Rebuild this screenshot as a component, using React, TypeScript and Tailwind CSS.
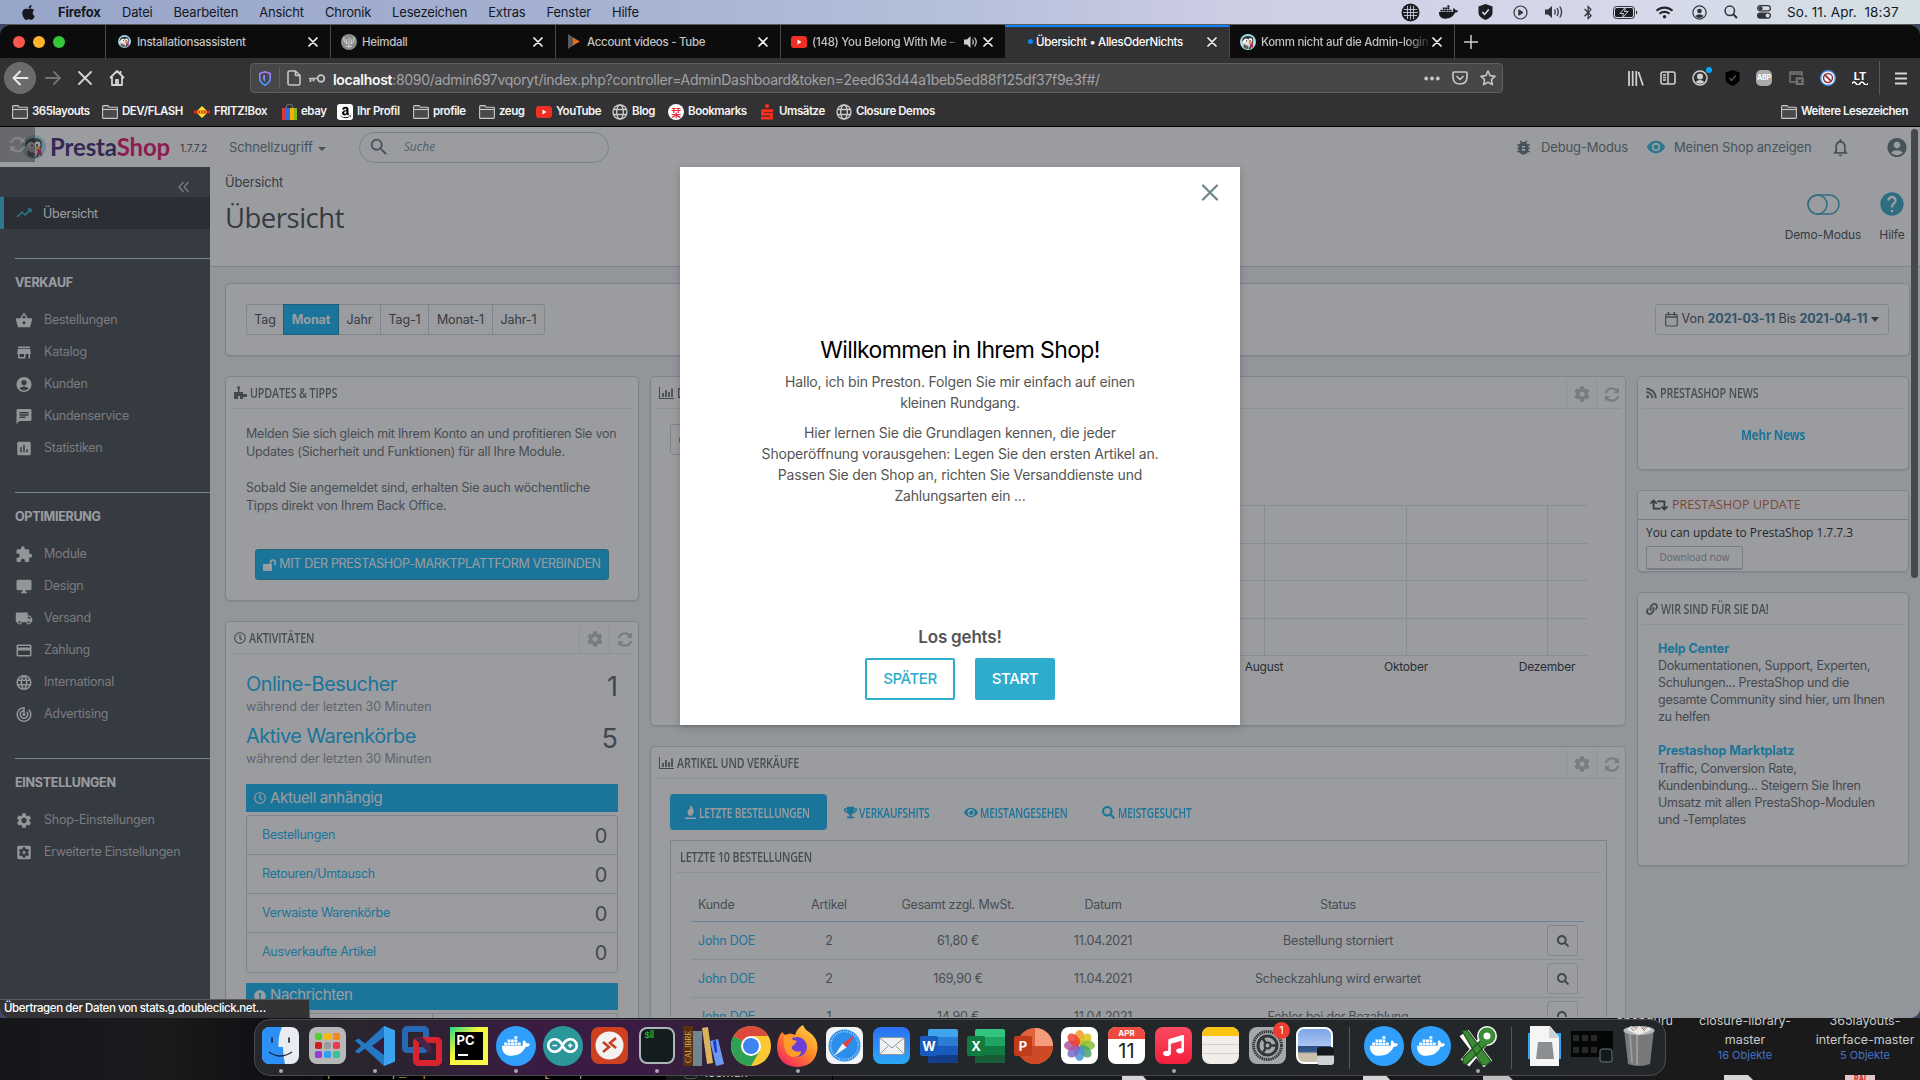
import React from "react";
import type { ReactNode } from "react";
import {
  MdTrendingUp, MdShoppingBasket, MdStore, MdAccountCircle, MdChat, MdAssessment, MdExtension, MdDesktopWindows,
  MdLocalShipping, MdPayment, MdLanguage, MdTrackChanges, MdSettings, MdSettingsApplications, MdNotificationsNone,
  MdVisibility, MdBugReport, MdHelp, MdSearch,
} from "react-icons/md";
import {
  FaApple, FaDocker, FaBluetoothB, FaWifi, FaCog, FaRss, FaLink, FaTrophy, FaEye, FaSearch, FaRetweet,
  FaRegClock, FaExclamationCircle, FaAmazon, FaMusic,
} from "react-icons/fa";
import { SiArduino } from "react-icons/si";

type P = { children?: ReactNode; className?: string };

/* ---------- macOS menu bar ---------- */
const menus = ["Datei", "Bearbeiten", "Ansicht", "Chronik", "Lesezeichen", "Extras", "Fenster", "Hilfe"];

const Slot = ({ children, className = "" }: P) => (
  <div className={"flex shrink-0 items-center justify-center " + className}>{children}</div>
);

function MenuBar() {
  return (
    <div className="flex h-[24px] items-center bg-[linear-gradient(90deg,#97a5c9_0%,#a4b1d1_30%,#b5c0da_50%,#cdcde4_64%,#d6d9ea_85%,#d3dfe3_100%)] text-[13px] tracking-[-0.2px] text-[#16181d]">
      <FaApple className="ml-[20px] h-[17px] w-[17px]" />
      <span className="mt-[2px] ml-[21px] w-[64px] font-bold">Firefox</span>
      <div className="mt-[2px] flex gap-[21px]">
        {menus.map((m) => <span key={m}>{m}</span>)}
      </div>
      <div className="ml-auto flex items-center">
        <Slot className="w-[38px]">
          <svg width="19" height="19" viewBox="0 0 19 19"><circle cx="9.500" cy="9.500" r="9" fill="#1c1d22" /><path d="M3 6.500h13M2 9.500h15M3 12.500h13M6.500 3v13M9.500 2.500v14M12.500 3v13" stroke="#c9cbe0" strokeWidth="0.900" /></svg>
        </Slot>
        <Slot className="w-[38px]"><FaDocker className="h-[18px] w-[19px]" /></Slot>
        <Slot className="w-[36px]"><Shield fill="#1c1d22" check="#dadbe9" /></Slot>
        <Slot className="w-[34px]">
          <svg width="15" height="15" viewBox="0 0 15 15" fill="none" stroke="#33343a"><circle cx="7.500" cy="7.500" r="6.500" strokeWidth="1.200" /><path d="M5.800 4.800v5.400l4.200-2.700z" fill="#33343a" /></svg>
        </Slot>
        <Slot className="w-[34px]">
          <svg width="19" height="14" viewBox="0 0 19 14"><path d="M0 4.500h3L7 1v12L3 9.500H0z" fill="#33343a" /><path d="M9.500 4.500q1.500 2.500 0 5M12 3q2.500 4 0 8M14.800 1.500q3.600 5.500 0 11" fill="none" stroke="#33343a" strokeWidth="1.300" /></svg>
        </Slot>
        <Slot className="w-[34px]"><FaBluetoothB className="h-[15px] w-[12px] text-[#33343a]" /></Slot>
        <Slot className="w-[40px]">
          <svg width="25" height="13" viewBox="0 0 25 13"><rect x="0.500" y="0.500" width="21" height="12" rx="3" fill="none" stroke="#33343a" /><rect x="2" y="2" width="18" height="9" rx="1.500" fill="#1c1d22" /><path d="M12.500 1L7 7.500h3.500L9.500 12 15 5.500h-3.500z" fill="#1c1d22" stroke="#d9dae8" strokeWidth="0.900" /><path d="M23 4.500v4q1.300-.5 1.300-2t-1.300-2z" fill="#33343a" /></svg>
        </Slot>
        <Slot className="w-[39px]"><FaWifi className="h-[15px] w-[17px] text-[#26272c]" /></Slot>
        <Slot className="w-[30px]">
          <svg width="15" height="15" viewBox="0 0 15 15"><circle cx="7.500" cy="7.500" r="6.600" fill="none" stroke="#33343a" strokeWidth="1.200" /><circle cx="7.500" cy="6" r="2.300" fill="#33343a" /><path d="M3.300 11q4.200-3.500 8.400 0-4.200 4-8.400 0" fill="#33343a" /></svg>
        </Slot>
        <Slot className="w-[34px]">
          <svg width="14" height="14" viewBox="0 0 14 14" fill="none" stroke="#33343a" strokeWidth="1.500"><circle cx="5.800" cy="5.800" r="4.700" /><path d="M9.200 9.200L13 13" strokeWidth="2" /></svg>
        </Slot>
        <Slot className="w-[31px]">
          <svg width="14" height="14" viewBox="0 0 14 14"><rect x="0.600" y="0.600" width="12.800" height="5.300" rx="2.600" fill="none" stroke="#33343a" strokeWidth="1.200" /><circle cx="3.600" cy="3.200" r="2" fill="#33343a" /><rect y="7.500" width="14" height="6.200" rx="3.100" fill="#33343a" /><circle cx="10.600" cy="10.600" r="2" fill="#d9dbe8" /></svg>
        </Slot>
        <span className="mr-[19px] ml-[8px] w-[114px] text-[13.500px] tracking-[0.080px] whitespace-pre">So. 11. Apr.  18:37</span>
      </div>
    </div>
  );
}

function Shield({ fill, check }: { fill: string; check: string }) {
  return (
    <svg width="15" height="16" viewBox="0 0 15 16"><path d="M7.500 0L14.500 2.500V9q0 4-7 7-7-3-7-7V2.500z" fill={fill} /><path d="M4.300 8l2.300 2.400 4.200-5" fill="none" stroke={check} strokeWidth="1.600" /></svg>
  );
}

/* ---------- Browser chrome ---------- */
const PrestonIcon = ({ size }: { size: number }) => (
  <svg width={size} height={size} viewBox="0 0 24 24">
    <circle cx="12" cy="12" r="12" fill="#a4dbe8" />
    <path d="M3 10Q4 3 12 3t8 6l-1 6-3 7q-7 2-11-2z" fill="#3a3a3d" />
    <path d="M3 13q1-5 6-5l6 1 1 5q0 5-3 8-6 0-9-4z" fill="#d9d9d7" />
    <circle cx="9" cy="10" r="3.300" fill="#fff" /><circle cx="15.500" cy="9.500" r="3" fill="#fff" />
    <circle cx="10" cy="10.500" r="1.100" fill="#222" /><circle cx="15" cy="10" r="1.100" fill="#222" />
    <path d="M13 12q4-2 6 2l1 7q-3 0-4-4z" fill="#d3156b" /><path d="M12 11l5 1 2 3-5-1z" fill="#f5b335" />
    <path d="M6 15q3 3 7 3l-1 4q-5 0-7-4z" fill="#57575a" />
  </svg>
);
const YouTube = () => (
  <svg width="16" height="12" viewBox="0 0 16 12"><rect width="16" height="12" rx="3" fill="#ef2e24" /><path d="M6.500 3.500v5l4-2.500z" fill="#fff" /></svg>
);
const Cross = () => (
  <svg width="10" height="10" viewBox="0 0 10 10" stroke="#f4f4f5" strokeWidth="1.700" strokeLinecap="round"><path d="M1 1l8 8M9 1L1 9" /></svg>
);

function Tab({ icon, label, active, sound, fade }: { icon: ReactNode; label: string; active?: boolean; sound?: boolean; fade?: boolean }) {
  return (
    <div className={active
      ? "flex h-[33px] w-[224px] shrink-0 items-center border-t-2 border-[#0a84ff] bg-[#323234] pb-[2px] text-white"
      : "flex h-[33px] w-[225px] shrink-0 items-center border-l border-[#4b4b4d] text-[#c2c2c3] last-of-type:border-0"}>
      <div className="ml-[10px] flex w-[16px] justify-center">{icon}</div>
      <div className={fade
        ? "ml-[5px] h-[18px] flex-1 overflow-hidden whitespace-nowrap [mask-image:linear-gradient(90deg,#000_85%,transparent)]"
        : "ml-[5px] h-[18px] flex-1 overflow-hidden whitespace-nowrap"}>{label}</div>
      {sound && (
        <svg className="mr-[5px]" width="14" height="12" viewBox="0 0 14 12"><path d="M0 3.500h3L6.500 0v12L3 8.500H0z" fill="#d0d0d1" /><path d="M8.500 3.500q1.500 2.500 0 5M10.500 1.500q3.500 4.500 0 9" fill="none" stroke="#d0d0d1" strokeWidth="1.200" /></svg>
      )}
      <div className="mr-[12px]"><Cross /></div>
    </div>
  );
}

function TabBar() {
  return (
    <div className="flex h-[33px] items-center overflow-hidden rounded-t-[10px] bg-[#0c0c0d] text-[11.500px] leading-[18px] font-medium tracking-[-0.3px]">
      <div className="flex w-[105px] shrink-0 gap-[8px] pl-[13px]">
        <div className="h-[12px] w-[12px] rounded-full bg-[#fc5650]" />
        <div className="h-[12px] w-[12px] rounded-full bg-[#fdb32a]" />
        <div className="h-[12px] w-[12px] rounded-full bg-[#33c63b]" />
      </div>
      <Tab icon={<PrestonIcon size={13} />} label="Installationsassistent" />
      <Tab label="Heimdall" icon={<svg width="16" height="16" viewBox="0 0 16 16"><circle cx="8" cy="8" r="8" fill="#8d8d8e" /><path d="M3 3q-1 5 3 7l-1-5M13 3q1 5-3 7l1-5M8 4v9M5 12q3 2 6 0" stroke="#d8d8d8" fill="none" /></svg>} />
      <Tab label="Account videos - Tube" icon={<svg width="14" height="15" viewBox="0 0 14 15"><path d="M1 0l6 4v7l-6 4z" fill="#5a5a5a" /><path d="M6 3.500l7 4-7 4z" fill="#f1680d" /></svg>} />
      <Tab label="(148) You Belong With Me – " sound fade icon={<YouTube />} />
      <Tab active label="Übersicht • AllesOderNichts" icon={<div className="mr-[-6px] ml-[8px] h-[5px] w-[5px] rounded-full bg-[#0a84ff]" />} />
      <Tab label="Komm nicht auf die Admin-login S" fade icon={<PrestonIcon size={16} />} />
      <div className="flex h-[33px] items-center border-l border-[#4b4b4d] pl-[9px]">
        <svg width="14" height="14" stroke="#d0d0d0" strokeWidth="1.500"><path d="M7 0v14M0 7h14" /></svg>
      </div>
    </div>
  );
}

function Toolbar() {
  return (
    <div className="flex h-[40px] items-center text-[#d3d3d4]">
      <div className="ml-[4px] flex h-[32px] w-[32px] items-center justify-center rounded-full bg-[#6b6b6c]">
        <svg width="17" height="16" fill="none" stroke="#e8e8e8" strokeWidth="2" strokeLinecap="round" strokeLinejoin="round"><path d="M15.500 8H1.500M8 1.500L1.500 8 8 14.500" /></svg>
      </div>
      <Slot className="ml-[9px] w-[16px]"><svg width="16" height="14" fill="none" stroke="#747476" strokeWidth="1.800" strokeLinecap="round"><path d="M1 7h14M9 1l6 6-6 6" /></svg></Slot>
      <Slot className="ml-[16px] w-[16px]"><svg width="14" height="14" fill="none" stroke="#d3d3d4" strokeWidth="1.800" strokeLinecap="round"><path d="M1 1l12 12M13 1L1 13" /></svg></Slot>
      <Slot className="ml-[16px] w-[16px]"><svg width="16" height="16" fill="none" stroke="#d3d3d4" strokeWidth="1.800" strokeLinejoin="round"><path d="M1 8l7-7 7 7M3 7v8h10V7M11.500 1v3M7 15v-5h2v5" /></svg></Slot>
      <div className="ml-[125px] flex h-[30px] w-[1253px] items-center rounded-[4px] border border-[#5f5f62] bg-[#474749] text-[14px]">
        <svg className="ml-[8px]" width="12" height="15" viewBox="0 0 12 15"><defs><linearGradient id="sh" x2="0" y2="1"><stop stopColor="#b07bff" /><stop offset="1" stopColor="#3d9bff" /></linearGradient></defs><path d="M6 .8L11.200 2.500v5q0 4-5.200 6.700Q.8 11.500.8 7.500v-5z" fill="none" stroke="url(#sh)" strokeWidth="1.600" /><path d="M6 4v7q-2-1.500-2-4V4.500z" fill="url(#sh)" /></svg>
        <div className="ml-[8px] h-[22px] w-px bg-[#5f5f62]" />
        <svg className="ml-[7px]" width="14" height="16" fill="none" stroke="#c6c6c7" strokeWidth="1.600" strokeLinejoin="round"><path d="M1 2.500Q1 1 2.500 1H8.500L13 5.500v8q0 1.500-1.500 1.500h-9Q1 15 1 13.500zM8.500 1v4.500H13" /></svg>
        <svg className="ml-[8px]" width="16" height="9" fill="none" stroke="#c6c6c7" strokeWidth="1.700"><circle cx="12" cy="4.500" r="3.300" /><path d="M8.500 4.500H0M1.500 4.500V8M4.500 4.500V7.500" /></svg>
        <span className="mt-[2px] ml-[8px] tracking-[-0.3px] whitespace-nowrap text-[#a2a2a3]"><span className="font-semibold text-[#f9f9fa]">localhost</span>:8090/admin697vqoryt/index.php?controller=AdminDashboard&amp;token=2eed63d44a1beb5ed88f125df37f9e3f#/</span>
        <div className="mr-[6px] ml-auto flex items-center gap-[12px]">
          <svg width="16" height="5" fill="#c6c6c7"><circle cx="2.200" cy="2.500" r="1.900" /><circle cx="8" cy="2.500" r="1.900" /><circle cx="13.800" cy="2.500" r="1.900" /></svg>
          <svg width="16" height="14" fill="none" stroke="#c6c6c7" strokeWidth="1.700" strokeLinecap="round" strokeLinejoin="round"><path d="M2 1h12q1 0 1 1v4q0 7-7 7T1 6V2q0-1 1-1zM5 5.500L8 8.500l3-3" /></svg>
          <svg width="16" height="16" viewBox="0 0 16 16" fill="none" stroke="#c6c6c7" strokeWidth="1.600" strokeLinejoin="round"><path d="M8 1l2.100 4.600 5 .6-3.700 3.400 1 5L8 12.200 3.600 14.600l1-5L.9 6.200l5-.6z" /></svg>
        </div>
      </div>
      <div className="ml-[117px] flex items-center">
        <Slot className="w-[32px]"><svg width="16" height="15" fill="none" stroke="#cfcfd0" strokeWidth="1.800"><path d="M1 0v15M4.700 0v15M8.300 0v15M10.500 1L15 14.500" /></svg></Slot>
        <Slot className="w-[32px]"><svg width="16" height="14" fill="none" stroke="#cfcfd0" strokeWidth="1.600"><rect x="1" y="1" width="14" height="12" rx="2" /><path d="M8 1v12M3 4h3M3 6.500h3M3 9h3" /></svg></Slot>
        <Slot className="relative w-[32px]"><svg width="16" height="16"><circle cx="8" cy="8" r="7" fill="none" stroke="#cfcfd0" strokeWidth="1.500" /><circle cx="8" cy="6.500" r="3" fill="#cfcfd0" /><path d="M3.500 12q4.500-4 9 0-4.500 3.500-9 0" fill="#cfcfd0" /></svg><div className="absolute -top-[3px] right-[4px] h-[6px] w-[6px] rounded-full bg-[#00a9ff]" /></Slot>
        <Slot className="w-[32px]"><Shield fill="#000" check="#4d4d4e" /></Slot>
        <Slot className="w-[32px]"><div className="flex h-[16px] w-[16px] items-center justify-center rounded-[5px] bg-[#a9a9aa] text-[7px] font-bold tracking-[-0.2px] text-white">ABP</div></Slot>
        <Slot className="w-[32px]"><svg width="15" height="14" fill="none" stroke="#77777a" strokeWidth="1.400"><path d="M7 11H1V1h12v4M1 3h12" /><rect x="7.500" y="7" width="6.500" height="6.500" fill="#77777a" /><path d="M9 8.500l3.500 3.500M12.500 8.500L9 12" stroke="#323234" /></svg></Slot>
        <Slot className="w-[32px]"><svg width="16" height="16"><circle cx="8" cy="8" r="7.300" fill="#fff" stroke="#4a90e2" strokeWidth="1.400" /><circle cx="8" cy="8" r="4.500" fill="none" stroke="#8d3039" strokeWidth="1.500" /><path d="M4.800 4.800l6.400 6.400" stroke="#8d3039" strokeWidth="1.800" /></svg></Slot>
        <Slot className="w-[32px]"><div className="flex flex-col items-center"><span className="text-[11px] leading-[10px] font-bold text-white">LT</span><svg width="16" height="4" fill="none" stroke="#fff" strokeWidth="1.500"><path d="M0 2.500q2-3 4 0t4 0 4 0 4 0" /></svg></div></Slot>
        <div className="ml-[3px] h-[34px] w-px bg-[#59595b]" />
        <svg className="ml-[15px]" width="12" height="13" stroke="#d6d6d7" strokeWidth="1.800"><path d="M0 1.500h12M0 6.500h12M0 11.500h12" /></svg>
      </div>
    </div>
  );
}

const Folder = () => (
  <svg width="16" height="14" viewBox="0 0 16 14" fill="#4a4a4c" stroke="#c9c9ca" strokeWidth="1.100"><path d="M.6 2Q.6.600 2 .6h4l1.200 1.700h7.500q.7 0 .7.700v9.400q0 1-1 1h-13q-.8 0-.8-1zM.6 4.500h14.800" /></svg>
);
const Globe = () => (
  <svg width="16" height="16" viewBox="0 0 16 16" fill="none" stroke="#c9c9ca" strokeWidth="1.400"><circle cx="8" cy="8" r="7" /><ellipse cx="8" cy="8" rx="3.300" ry="7" /><path d="M1.500 5.500h13M1.500 10.500h13" /></svg>
);
const bookmarks: [string, string, ReactNode][] = [
  ["365layouts", "w-[90px]", <Folder />],
  ["DEV/FLASH", "w-[92px]", <Folder />],
  ["FRITZ!Box", "w-[87px]", <svg width="16" height="12" viewBox="0 0 16 12"><path d="M8 0l6 6-6 6-6-6z" fill="#ffe22e" /><path d="M0 4.500h16v3H0z" fill="#e2231a" /><path d="M4 5v2M6.500 5v2M9 5v2M12 5v2" stroke="#ffe22e" /></svg>],
  ["ebay", "w-[56px]", <svg width="15" height="16"><path d="M4 4q0-4 3.500-4T11 4" fill="none" stroke="#777" /><path d="M0 4h4v12H0z" fill="#e53238" /><path d="M4 4h4v12H4z" fill="#2a6fe0" /><path d="M8 4h4v12H8z" fill="#f5af02" /><path d="M12 4h3v12h-3z" fill="#86b817" /></svg>],
  ["Ihr Profil", "w-[76px]", <div className="flex h-[16px] w-[16px] items-center justify-center rounded-[3px] bg-white text-black"><FaAmazon className="h-[13px] w-[13px]" /></div>],
  ["profile", "w-[66px]", <Folder />],
  ["zeug", "w-[57px]", <Folder />],
  ["YouTube", "w-[76px]", <YouTube />],
  ["Blog", "w-[56px]", <Globe />],
  ["Bookmarks", "w-[91px]", <div className="flex h-[16px] w-[16px] items-center justify-center rounded-full bg-white font-['Noto_Sans_CJK_JP',sans-serif] text-[10px] text-[#e8322b]">栞</div>],
  ["Umsätze", "w-[77px]", <svg width="12" height="16" viewBox="0 0 12 16" fill="none" stroke="#ff2d1b"><circle cx="6" cy="2" r="2" fill="#ff2d1b" stroke="none" /><path d="M12 6.700H1.500V10.200H10.500V14.200H0" strokeWidth="2.800" /></svg>],
  ["Closure Demos", "w-[110px]", <Globe />],
];

function Bookmarks() {
  return (
    <div className="flex h-[28px] items-center pl-[12px] text-[11.500px] font-semibold tracking-[-0.45px] whitespace-nowrap text-[#f4f4f5]">
      {bookmarks.map(([t, w, icon]) => (
        <div key={t} className={"flex shrink-0 items-center " + w}>
          <div className="mr-[4px] flex w-[16px] shrink-0 justify-center">{icon}</div>{t}
        </div>
      ))}
      <div className="mr-[12px] ml-auto flex items-center gap-[4px]"><Folder />Weitere Lesezeichen</div>
    </div>
  );
}

/* ---------- PrestaShop back office ---------- */
function ShopHeader() {
  return (
    <div className="flex h-[40px] items-center bg-white text-[13px] text-[#6c868e]">
      <div className="relative h-full w-[226px]">
        <div className="absolute top-[8px] left-[22px]"><PrestonIcon size={24} /></div>
        <div className="absolute top-[5px] left-[50px] font-['Lato',sans-serif] text-[24px] leading-[30px] font-bold tracking-[-0.15px] text-[#33146b]">Presta<span className="text-[#e2005f]">Shop</span></div>
        <div className="absolute top-[14px] left-[180px] text-[10.500px] leading-[16px] tracking-[-0.2px] text-[#363a41]">1.7.7.2</div>
        <div className="absolute top-0 left-0 flex h-[35px] w-[35px] items-center justify-center bg-black/40">
          <Refresh className="h-[17px] w-[17px] text-white/50" />
        </div>
      </div>
      <span className="mt-[2px] ml-[3px] tracking-[-0.1px] text-[#576c72]">Schnellzugriff</span>
      <div className="mt-[3px] ml-[5px] h-0 w-0 border-x-[4px] border-t-[4px] border-x-transparent border-t-[#576c72]" />
      <div className="ml-[33px] flex h-[31px] w-[250px] items-center rounded-full border border-[#bbcdd2]">
        <MdSearch className="ml-[8px] h-[22px] w-[22px] text-[#576c72]" />
        <span className="ml-[14px] font-['Open_Sans',sans-serif] text-[12px] text-[#6c868e] italic">Suche</span>
      </div>
      <div className="mr-[11px] ml-auto flex items-center tracking-[-0.15px] text-[#576c72]">
        <MdBugReport className="mr-[8px] h-[19px] w-[19px]" />
        <span className="mt-[2px] w-[105px] whitespace-nowrap">Debug-Modus</span>
        <MdVisibility className="mr-[8px] h-[20px] w-[20px] text-[#25b9d7]" />
        <span className="mt-[2px] w-[156px] whitespace-nowrap">Meinen Shop anzeigen</span>
        <MdNotificationsNone className="h-[21px] w-[21px]" />
        <MdAccountCircle className="ml-[34px] h-[23px] w-[24px]" />
      </div>
    </div>
  );
}

const sections = [
  { title: "VERKAUF", items: [["Bestellungen", MdShoppingBasket], ["Katalog", MdStore], ["Kunden", MdAccountCircle], ["Kundenservice", MdChat], ["Statistiken", MdAssessment]] },
  { title: "OPTIMIERUNG", items: [["Module", MdExtension], ["Design", MdDesktopWindows], ["Versand", MdLocalShipping], ["Zahlung", MdPayment], ["International", MdLanguage], ["Advertising", MdTrackChanges]] },
  { title: "EINSTELLUNGEN", items: [["Shop-Einstellungen", MdSettings], ["Erweiterte Einstellungen", MdSettingsApplications]] },
] as const;

function Sidebar() {
  return (
    <div className="h-[851px] w-[210px] shrink-0 bg-[#363a41] text-[12.500px] tracking-[-0.26px] text-[#bebebe]">
      <div className="flex h-[30px] items-end justify-end pr-[21px] pb-[4px]">
        <svg width="11" height="12" fill="none" stroke="#bebebe" strokeWidth="1.300"><path d="M5.500 1L1 6l4.500 5M10.500 1L6 6l4.500 5" /></svg>
      </div>
      <div className="flex h-[32px] items-center border-l-[4px] border-[#25b9d7] bg-[#202226] pl-[11px] text-white">
        <MdTrendingUp className="mr-[10px] h-[18px] w-[18px] text-[#25b9d7]" /><span className="mt-[2px]">Übersicht</span>
      </div>
      <div className="h-[29px]" />
      {sections.map((s) => (
        <div key={s.title} className="pb-[28px]">
          <div className="ml-[15px] border-t border-[#c5d3d8] pt-[14px] leading-[20px] font-bold text-white">{s.title}</div>
          <div className="h-[11px]" />
          {s.items.map(([t, Icon]) => (
            <div key={t} className="flex h-[32px] items-center pl-[15px]">
              <Icon className="mr-[11px] h-[19px] w-[18px] text-[#f0f0f0]" />{t}
            </div>
          ))}
        </div>
      ))}
    </div>
  );
}

const Condensed = ({ children, className = "" }: P) => (
  <span className={"inline-block origin-left font-['Open_Sans',sans-serif] font-semibold whitespace-nowrap " + className}>{children}</span>
);

function Panel({ children, className = "" }: P) {
  return <div className={"rounded-[5px] border border-[#c6d0d3] bg-white shadow-[0_1px_2px_rgba(0,0,0,0.12)] " + className}>{children}</div>;
}

const Refresh = ({ className = "" }: P) => (
  <svg className={className} viewBox="0 0 15 14" fill="none" stroke="currentColor" strokeWidth="2.200"><path d="M1.500 5.500Q3.500 1.200 7.500 1.200q3 0 5 2.600M13.500 8.500q-2 4.300-6 4.300-3 0-5-2.600" /><path d="M14 .5v5H9zM1 13.500v-5h5z" fill="currentColor" stroke="none" /></svg>
);

function Heading({ icon, title, tools }: { icon: ReactNode; title: string; tools?: boolean }) {
  return (
    <div className="mx-[4px] flex h-[32px] items-center border-b border-[#e6e8e9] pl-[4px] text-[#5c5e62]">
      {icon}
      <Condensed className="ml-[3px] scale-x-[0.715] text-[15px] tracking-[-0.2px]">{title}</Condensed>
      {tools && (
        <div className="ml-auto flex h-full pt-[3px] text-[#bdc0c4]">
          <div className="flex w-[30px] items-center justify-center border-l border-[#e6e8e9]"><FaCog className="h-[16px] w-[16px]" /></div>
          <div className="flex w-[25px] items-center justify-end border-l border-[#e6e8e9]"><Refresh className="mr-[1px] h-[15px] w-[16px]" /></div>
        </div>
      )}
    </div>
  );
}

const BarChart = () => (
  <svg className="shrink-0" width="15" height="12" fill="none" stroke="#55575b"><path d="M.5 0v11.500H15" /><path d="M4 10V6M7 10V3M10 10V5M13 10V1.500" strokeWidth="1.700" /></svg>
);

function PageHead() {
  return (
    <div className="flex h-[100px] justify-between border-b border-[#c9d1d4] bg-white pl-[15px]">
      <div>
        <div className="pt-[5px] text-[13px] leading-[20px] tracking-[-0.15px] text-[#363a41]">Übersicht</div>
        <div className="mt-[6px] font-['Open_Sans',sans-serif] text-[27.500px] leading-[40px] tracking-[-0.5px] text-[#363a41]">Übersicht</div>
      </div>
      <div className="flex pt-[25px] text-[12px] tracking-[-0.1px] text-[#363a41]">
        <div className="flex w-[90px] flex-col items-center">
          <svg width="33" height="24" fill="none" stroke="#25a0bd" strokeWidth="1.500"><rect x="1" y="3" width="31" height="19" rx="9.500" /><rect x="1" y="3" width="19" height="19" rx="9.500" /></svg>
          <span className="mt-[10px]">Demo-Modus</span>
        </div>
        <div className="mr-[4px] flex w-[48px] flex-col items-center">
          <MdHelp className="h-[28px] w-[28px] -translate-y-[2px] text-[#25a0bd]" />
          <span className="mt-[6px]">Hilfe</span>
        </div>
      </div>
    </div>
  );
}

const periods: [string, string][] = [["Jahr", "w-[42px]"], ["Tag-1", "w-[48px]"], ["Monat-1", "w-[64px]"], ["Jahr-1", "w-[52px]"]];

function FilterPanel() {
  return (
    <Panel className="mt-[16px] mr-[10px] ml-[15px] flex h-[73px] items-center justify-between px-[20px] text-[12.500px] tracking-[-0.1px] text-[#363a41]">
      <div className="flex h-[31px] items-stretch leading-[30px]">
        <div className="w-[37px] rounded-l-[3px] border border-r-0 border-[#ccd3d6] text-center">Tag</div>
        <div className="w-[56px] border border-[#0087bb] bg-[#00aff0] text-center font-bold text-white">Monat</div>
        {periods.map(([t, w]) => <div key={t} className={"border border-l-0 border-[#ccd3d6] text-center last:rounded-r-[3px] " + w}>{t}</div>)}
      </div>
      <div className="flex h-[31px] w-[234px] items-center justify-center rounded-[3px] border border-[#ccd3d6] whitespace-pre text-[#363a41]">
        <svg className="mr-[4px]" width="13" height="15" fill="none" stroke="#55575b" strokeWidth="1.200"><rect x="0.700" y="2.500" width="11.500" height="11.500" rx="1" /><path d="M.7 5h11.500M3.500 0v3.500M9.300 0v3.500" strokeWidth="1.600" /></svg>
        Von <b className="text-[#2b6e8e]">2021-03-11</b> Bis <b className="text-[#2b6e8e]">2021-04-11</b>
        <div className="ml-[4px] h-0 w-0 border-x-[4px] border-t-[5px] border-x-transparent border-t-[#363a41]" />
      </div>
    </Panel>
  );
}

function LeftColumn() {
  return (
    <div className="w-[414px] shrink-0">
      <Panel className="h-[225px]">
        <Heading title="UPDATES & TIPPS" icon={<svg className="shrink-0" width="13" height="13" fill="#55575b"><path d="M0 6h4V4L3 1l2-1 1 1-.5 3v2H9v2h4v3H9v2H6v-3H4v3H0z" /></svg>} />
        <div className="px-[20px] pt-[16px] text-[12.500px] leading-[18px] tracking-[-0.21px] whitespace-nowrap text-[#5c5f63]">
          <p>Melden Sie sich gleich mit Ihrem Konto an und profitieren Sie von<br />Updates (Sicherheit und Funktionen) für all Ihre Module.</p>
          <p className="mt-[18px]">Sobald Sie angemeldet sind, erhalten Sie auch wöchentliche<br />Tipps direkt von Ihrem Back Office.</p>
        </div>
        <div className="mt-[34px] ml-[29px] flex h-[31px] w-[354px] items-center justify-center rounded-[3px] border border-[#1e94ab] bg-[#00aff0] text-[12.500px] tracking-[-0.33px] whitespace-nowrap text-white">
          <svg className="mr-[3px] shrink-0" width="13" height="12"><rect y="5" width="9" height="7" rx="1" fill="#fff" /><path d="M7.500 5V3.500q0-2.500 2.300-2.500T12.200 3.500V6" fill="none" stroke="#fff" strokeWidth="1.600" /></svg>
          MIT DER PRESTASHOP-MARKTPLATTFORM VERBINDEN
        </div>
      </Panel>
      <Panel className="mt-[20px] h-[410px] rounded-b-none border-b-0">
        <Heading tools title="AKTIVITÄTEN" icon={<FaRegClock className="h-[12px] w-[12px] shrink-0" />} />
        <div className="px-[20px] pt-[13px]">
          {[["Online-Besucher", "1"], ["Aktive Warenkörbe", "5"]].map(([t, n]) => (
            <div key={t} className="flex h-[52px] justify-between">
              <div>
                <div className="pt-[4px] text-[20px] leading-[26px] tracking-[-0.55px] text-[#00aff0]">{t}</div>
                <div className="mt-px text-[12.500px] leading-[18px] tracking-[-0.1px] text-[#8b8e92]">während der letzten 30 Minuten</div>
              </div>
              <div className="pt-[4px] text-[27px] leading-[32px] text-[#4f5257]">{n}</div>
            </div>
          ))}
        </div>
        <div className="mx-[20px] mt-[13px] flex h-[28px] items-center bg-[#00aff0] pl-[8px] text-[15px] tracking-[-0.35px] text-white"><FaRegClock className="mr-[4px] h-[12px] w-[12px]" />Aktuell anhängig</div>
        <div className="mx-[20px] mt-[3px] rounded-[3px] border border-[#c6ced1]">
          {["Bestellungen", "Retouren/Umtausch", "Verwaiste Warenkörbe", "Ausverkaufte Artikel"].map((t) => (
            <div key={t} className="flex h-[39px] items-center justify-between border-b border-[#c6ced1] pr-[10px] pl-[15px] text-[12.500px] tracking-[-0.28px] text-[#00aff0] last:border-b-0">
              {t}<span className="mt-px text-[20px] text-[#55575b]">0</span>
            </div>
          ))}
        </div>
        <div className="mx-[20px] mt-[10px] flex h-[27px] items-center bg-[#00aff0] pb-[2px] pl-[8px] text-[15px] tracking-[-0.35px] text-white"><FaExclamationCircle className="mr-[4px] h-[12px] w-[12px]" />Nachrichten</div>
        <div className="mx-[20px] mt-[3px] flex h-[8px] rounded-t-[3px] border border-b-0 border-[#c6ced1]"><div className="w-[186px] border-r border-[#c6ced1]" /></div>
      </Panel>
    </div>
  );
}

const orders = [["2", "61,80 €", "Bestellung storniert"], ["2", "169,90 €", "Scheckzahlung wird erwartet"], ["1", "14,90 €", "Fehler bei der Bezahlung"]];
const cols = "grid grid-cols-[83px_110px_148px_142px_328px_83px] text-center";
const tabText = "scale-x-[0.725] text-[14px] tracking-[-0.2px]";

function MidColumn() {
  return (
    <div className="w-[976px] shrink-0">
      <Panel className="h-[350px]">
        <Heading tools title="DASHBOARD" icon={<BarChart />} />
        <div className="mt-[15px] ml-[19px] flex h-[31px] w-[200px] items-center rounded-[3px] border border-[#c6ced1] pl-[8px]"><div className="h-[10px] w-[10px] rounded-full bg-[#b03fd0]" /></div>
        <svg className="mt-[47px] ml-[39px] block" width="897" height="180" fill="none" stroke="#dcdee0">
          <path d="M0 3.500h897M0 41.500h897M0 78.500h897M0 116.500h897M0 153.500h897M574.500 3v150M716.500 3v150M857.500 3v150" />
          <g fill="#202226" stroke="none" fontSize="12" textAnchor="middle" letterSpacing="-0.250"><text x="574" y="169">August</text><text x="716" y="169">Oktober</text><text x="857" y="169">Dezember</text></g>
        </svg>
      </Panel>
      <Panel className="mt-[20px] h-[285px] rounded-b-none border-b-0">
        <Heading tools title="ARTIKEL UND VERKÄUFE" icon={<BarChart />} />
        <div className="mt-[15px] ml-[19px] flex h-[36px] items-center text-[#00aff0]">
          <div className="flex h-[36px] w-[157px] shrink-0 items-center rounded-[4px] bg-[#00aff0] pl-[15px] text-white"><svg className="shrink-0" width="11" height="15" fill="#fff"><path d="M5.500 0q4 4 3 7.500-1 3-3 3.500Q2.500 10 2.500 7.500q0-2 2-3.500 1-1.500 1-4M0 12.500h11v1.500H0z" /></svg><Condensed className={"ml-[3px] " + tabText}>LETZTE BESTELLUNGEN</Condensed></div>
          <div className="ml-[17px] flex w-[120px] shrink-0 items-center"><FaTrophy className="h-[13px] w-[13px] shrink-0" /><Condensed className={"ml-[2px] " + tabText}>VERKAUFSHITS</Condensed></div>
          <div className="flex w-[138px] shrink-0 items-center"><FaEye className="h-[13px] w-[14px] shrink-0" /><Condensed className={"ml-[2px] " + tabText}>MEISTANGESEHEN</Condensed></div>
          <div className="flex items-center"><FaSearch className="h-[13px] w-[13px] shrink-0" /><Condensed className={"ml-[3px] " + tabText}>MEISTGESUCHT</Condensed></div>
        </div>
        <div className="mt-[10px] ml-[19px] h-[177px] w-[937px] overflow-hidden border border-b-0 border-[#c6ced1] px-[5px]">
          <div className="flex h-[32px] items-center border-b border-[#e6e8e9] pl-[4px] text-[#5c5e62]"><Condensed className="scale-x-[0.715] text-[15px] tracking-[-0.2px]">LETZTE 10 BESTELLUNGEN</Condensed></div>
          <div className="mt-[15px] ml-[15px] w-[894px] text-[12.500px] tracking-[-0.25px] text-[#5c5f63]">
            <div className={cols + " h-[34px] items-center border-b border-[#a0d0eb] pt-[2px]"}><span className="pl-[7px] text-left">Kunde</span><span>Artikel</span><span>Gesamt zzgl. MwSt.</span><span>Datum</span><span>Status</span></div>
            {orders.map(([n, sum, st]) => (
              <div key={sum} className={cols + " h-[38px] shrink-0 items-center border-b border-[#e0e3e5] leading-[20px]"}>
                <span className="pt-px pl-[7px] text-left text-[#00aff0]">John DOE</span><span className="pt-px">{n}</span><span className="pt-px">{sum}</span><span className="pt-px">11.04.2021</span><span className="pt-px">{st}</span>
                <div className="ml-[45px] flex h-[31px] w-[31px] items-center justify-center rounded-[3px] border border-[#ccd3d6]"><FaSearch className="h-[12px] w-[12px] text-[#4f5257]" /></div>
              </div>
            ))}
          </div>
        </div>
      </Panel>
    </div>
  );
}

function RightColumn() {
  return (
    <div className="w-[272px] shrink-0">
      <Panel className="h-[94px]">
        <Heading title="PRESTASHOP NEWS" icon={<FaRss className="h-[12px] w-[11px] shrink-0" />} />
        <div className="mt-[13px] h-[22px] text-center text-[#00aff0]"><span className="inline-block scale-x-[0.78] font-['Open_Sans',sans-serif] text-[15px] leading-[20px] font-bold tracking-[-0.3px]">Mehr News</span></div>
      </Panel>
      <Panel className="mt-[20px] h-[82px] overflow-hidden font-['Open_Sans',sans-serif]">
        <div className="flex h-[29px] items-center border-b border-[#b9c0c3] pl-[12px] text-[12.500px] tracking-[0.050px] text-[#c65433]"><FaRetweet className="mr-[4px] h-[16px] w-[18px] text-[#363a41]" />PRESTASHOP UPDATE</div>
        <div className="pt-[3px] pl-[8px] text-[12px] leading-[19px] tracking-[-0.05px] text-[#111]">You can update to PrestaShop 1.7.7.3</div>
        <div className="mt-[4px] ml-[8px] flex h-[24px] w-[97px] items-center justify-center rounded-[2px] border border-b-2 border-[#bcc3c6] text-[10px] text-[#8b8f93]">Download now</div>
      </Panel>
      <Panel className="mt-[20px] h-[274px]">
        <Heading title="WIR SIND FÜR SIE DA!" icon={<FaLink className="h-[12px] w-[12px] shrink-0" />} />
        <div className="px-[20px] pt-[15px] text-[12.500px] leading-[17.100px] tracking-[-0.28px] whitespace-nowrap text-[#55575b]">
          <b className="tracking-[-0.12px] text-[#00aff0]">Help Center</b><br />Dokumentationen, Support, Experten,<br />Schulungen... PrestaShop und die<br />gesamte Community sind hier, um Ihnen<br />zu helfen
          <div className="h-[17px]" />
          <b className="tracking-[-0.12px] text-[#00aff0]">Prestashop Marktplatz</b><br />Traffic, Conversion Rate,<br />Kundenbindung... Steigern Sie Ihren<br />Umsatz mit allen PrestaShop-Modulen<br />und -Templates
        </div>
      </Panel>
    </div>
  );
}

function WelcomeModal() {
  return (
    <div className="absolute top-[40px] left-[680px] flex h-[558px] w-[560px] flex-col items-center bg-white text-center text-[#555] shadow-[0_2px_8px_rgba(0,0,0,0.2)]">
      <svg className="absolute top-[17px] right-[21px]" width="18" height="17" stroke="#6c868e" strokeWidth="2.200" strokeLinecap="round"><path d="M2 1.500l14 14M16 1.500l-14 14" /></svg>
      <div className="mt-[167px] text-[23px] leading-[32px] tracking-[-0.65px] text-black">Willkommen in Ihrem Shop!</div>
      <p className="mt-[5px] text-[14px] leading-[21px] tracking-[-0.18px]">Hallo, ich bin Preston. Folgen Sie mir einfach auf einen<br />kleinen Rundgang.</p>
      <p className="mt-[9px] text-[14px] leading-[21px] tracking-[-0.18px]">Hier lernen Sie die Grundlagen kennen, die jeder<br />Shoperöffnung vorausgehen: Legen Sie den ersten Artikel an.<br />Passen Sie den Shop an, richten Sie Versanddienste und<br />Zahlungsarten ein ...</p>
      <div className="mt-[119px] text-[17px] leading-[24px] font-semibold tracking-[-0.2px]">Los gehts!</div>
      <div className="mt-[9px] flex h-[42px] gap-[20px] text-[15px] font-medium tracking-[-0.4px]">
        <div className="flex w-[90px] items-center justify-center rounded-[2px] border-2 border-[#2eacce] text-[#2eacce]">SPÄTER</div>
        <div className="flex w-[80px] items-center justify-center rounded-[2px] bg-[#2eacce] text-white">START</div>
      </div>
    </div>
  );
}

/* ---------- Dock ---------- */
const Tile = ({ children, className = "" }: P) => (
  <div className={"flex h-[37px] w-[37px] flex-col items-center justify-center overflow-hidden rounded-[8px] " + className}>{children}</div>
);
const Docker = () => <div className="flex h-[40px] w-[40px] items-center justify-center rounded-full bg-[#2f9ffb] text-white"><FaDocker className="h-[28px] w-[28px]" /></div>;

const OfficeIcon = ({ letter, a, b, c, d }: { letter: string; a: string; b: string; c: string; d: string }) => (
  <svg width="40" height="36" viewBox="0 0 40 36">
    <rect x="9" y="1" width="30" height="34" rx="2" fill={a} /><rect x="9" y="9" width="30" height="9" fill={b} /><rect x="9" y="18" width="30" height="9" fill={c} /><path d="M9 27h30v6q0 2-2 2H11q-2 0-2-2z" fill={d} />
    <rect x="1" y="8" width="18" height="20" rx="2" fill={c} /><text x="10" y="23" fill="#fff" fontSize="13" fontWeight="700" textAnchor="middle">{letter}</text>
  </svg>
);

const petals = ["#f59a23", "#d9c31b", "#8bbf3a", "#49a56f", "#4a90d9", "#7a6bc4", "#b0559c", "#ea4335"];

type DockItem = { icon: ReactNode; dot?: boolean };
const dock: DockItem[] = [
  { dot: true, icon: <svg width="37" height="37" viewBox="0 0 37 37"><rect width="37" height="37" rx="8" fill="#e9ecf2" /><path d="M8 0h12q-4 9-3.500 20H21q0 9 2 17H8q-8 0-8-8V8q0-8 8-8" fill="#2b8ff5" /><path d="M10 11v4M27 11v4" stroke="#1d2b45" strokeWidth="1.700" strokeLinecap="round" /><path d="M7 25q11 8 23 0" fill="none" stroke="#1d2b45" strokeWidth="1.500" /></svg> },
  { icon: <Tile className="bg-[#b7b8b8]"><svg width="27" height="27" viewBox="0 0 27 27">{["#4fd12f", "#f6b912", "#f78b12", "#cf1f1f", "#9b9b9b", "#f1364f", "#8e3fd8", "#2fa0f0", "#36c29a"].map((c, i) => <rect key={c} x={1 + (i % 3) * 9} y={1 + Math.floor(i / 3) * 9} width="7" height="7" rx="1.800" fill={c} />)}</svg></Tile> },
  { dot: true, icon: <svg width="40" height="40" viewBox="0 0 40 40"><path d="M29 0l11 4.500v31L29 40 10 22.500 3.500 27.500 0 25.500 6 20 0 14.500l3.500-2L10 17.500z" fill="#2579c4" /><path d="M29 0l11 4.500v31L29 40z" fill="#3ba3ee" /><path d="M29 11v18L17 20z" fill="#321d3c" /></svg> },
  { icon: <svg width="40" height="40" viewBox="0 0 40 40"><rect x="3" y="3" width="21" height="21" rx="2" fill="none" stroke="#2867b4" strokeWidth="6" /><rect x="14" y="14" width="23" height="23" rx="2" fill="none" stroke="#d6252e" strokeWidth="6" /><path d="M11 11h9l9 9v9z" fill="#4a2347" /></svg> },
  { icon: <div className="flex h-[38px] w-[38px] items-center justify-center bg-[linear-gradient(135deg,#21d789,#f4f43c_40%,#fcf84a)]"><div className="relative h-[28px] w-[28px] bg-black pl-[2px] text-[13px] leading-[17px] font-bold text-white">PC<div className="absolute bottom-[4px] left-[3px] h-[1.500px] w-[10px] bg-white" /></div></div> },
  { dot: true, icon: <Docker /> },
  { icon: <div className="flex h-[40px] w-[40px] items-center justify-center rounded-full bg-[#2c979b] text-white"><SiArduino className="h-[31px] w-[31px]" /></div> },
  { icon: <Tile className="bg-[#cd4020]"><svg width="29" height="29"><circle cx="14.500" cy="14.500" r="14" fill="#f4f2f1" /><path d="M8 11l6 5-6 5M21 7l-6 5 6 5" fill="none" stroke="#c83e20" strokeWidth="2.600" /></svg></Tile> },
  { dot: true, icon: <div className="h-[37px] w-[36px] rounded-[8px] border-2 border-[#aeb6ba] bg-[#131d20] pl-[4px] font-['Liberation_Mono',monospace] text-[9px] leading-[15px] text-[#38d13f]">$<span className="inline-block h-[8px] w-[4px] bg-[#1b7a20]" /></div> },
  { icon: <svg width="42" height="40" viewBox="0 0 42 40"><rect x="0" y="0" width="10" height="40" fill="#5a2f12" /><rect x="10" y="5" width="9" height="35" fill="#6d8692" /><path d="M19 2l6-1 5 36-6 1z" fill="#d9b35e" /><path d="M27 15l8-2 6 25-8 2z" fill="#6d99f2" /><path d="M30 15l3-1 1 12-2 1z" fill="#1c38c8" /><text transform="rotate(-90 8 37)" x="8" y="37" fontSize="7.500" fill="#e6b868" fontFamily="Liberation Serif">CALIBRE</text></svg> },
  { icon: <svg width="40" height="40" viewBox="0 0 40 40"><circle cx="20" cy="20" r="20" fill="#fcc934" /><path d="M20 20L2.700 10A20 20 0 0 1 37.300 10H20z" fill="#dc4a3c" /><path d="M20 20L2.700 10A20 20 0 0 0 20 40L28.700 25z" fill="#2fa155" /><circle cx="20" cy="20" r="10" fill="#fff" /><circle cx="20" cy="20" r="8" fill="#3f83f1" /></svg> },
  { dot: true, icon: <svg width="41" height="42" viewBox="0 0 41 42"><defs><linearGradient id="ff" x1="1" y1="0" x2="0.200" y2="1"><stop stopColor="#ffe44b" /><stop offset="0.500" stopColor="#ff8a28" /><stop offset="1" stopColor="#f4245f" /></linearGradient></defs><path d="M26 0q2 5 6 7 9 6 8.500 16Q39 41 20.500 42 1 41 0 23 0 13 5 7l3 3q5-3 10 0 2-7 8-10" fill="url(#ff)" /><circle cx="20" cy="22" r="10" fill="#6b3fd6" /><path d="M7 10q6 0 9 5l4 1-3 4q-3 1-2 4 4 4 9 2 0 6-8 6-11-2-9-22" fill="#ff9a2b" /></svg> },
  { icon: <Tile className="bg-[#f2f3f4]"><svg width="33" height="33"><circle cx="16.500" cy="16.500" r="16" fill="#2a8eea" /><circle cx="16.500" cy="16.500" r="14" fill="none" stroke="#bfe0fa" strokeWidth="2" strokeDasharray="0.700 1.500" /><path d="M27 6L18.500 18.500 14.500 14.500z" fill="#ee3e35" /><path d="M6 27l8.500-12.500 4 4z" fill="#f1f1f1" /></svg></Tile> },
  { icon: <Tile className="bg-[linear-gradient(#2d6ff3,#2ca8f8)]"><svg width="26" height="18" fill="#f1f2f4" stroke="#8f9499"><rect x="0.500" y="0.500" width="25" height="17" rx="2" /><path d="M1 1l12 10L25 1M1 17l8-8M25 17l-8-8" fill="none" /></svg></Tile> },
  { icon: <OfficeIcon letter="W" a="#41a5ee" b="#2b7cd3" c="#185abd" d="#143c88" /> },
  { icon: <OfficeIcon letter="X" a="#33c481" b="#21a366" c="#107c41" d="#1a5c38" /> },
  { icon: <svg width="40" height="38" viewBox="0 0 40 38"><circle cx="22" cy="19" r="18" fill="#e0623c" /><path d="M22 1a18 18 0 0 1 18 18H22z" fill="#f79b7d" /><path d="M4 19h36a18 18 0 0 1-36 0" fill="#cc4a26" /><rect x="1" y="9" width="18" height="20" rx="2" fill="#c03a1b" /><text x="10" y="24" fill="#fff" fontSize="13" fontWeight="700" textAnchor="middle">P</text></svg> },
  { icon: <Tile className="bg-white"><svg width="33" height="33" viewBox="0 0 33 33">{petals.map((c, i) => <ellipse key={c} cx="16.500" cy="8.500" rx="5" ry="7.500" fill={c} opacity="0.850" transform={`rotate(${i * 45} 16.500 16.500)`} />)}</svg></Tile> },
  { icon: <Tile className="bg-white"><div className="h-[12px] w-full bg-[#ee4a3e] text-center text-[8px] leading-[12px] font-bold text-white">APR</div><div className="flex-1 text-[20px] leading-[24px] text-[#222]">11</div></Tile> },
  { dot: true, icon: <Tile className="bg-[linear-gradient(#fb4a62,#f3203c)] text-white"><FaMusic className="h-[21px] w-[21px]" /></Tile> },
  { icon: <Tile className="bg-[#f1eeea]"><div className="h-[9px] w-full bg-[#fdc313]" /><div className="mt-[8px] h-px w-full bg-[#d4d1cd]" /><div className="mt-[8px] h-px w-full bg-[#d4d1cd]" /><div className="flex-1" /></Tile> },
  { icon: <div className="relative"><Tile className="bg-[#a5a9ab]"><svg width="33" height="33" fill="none" stroke="#34373a"><circle cx="16.500" cy="16.500" r="14" strokeWidth="3" strokeDasharray="1.500 0.700" /><circle cx="16.500" cy="16.500" r="9.500" strokeWidth="3" /><circle cx="16.500" cy="16.500" r="3" strokeWidth="2" /><path d="M19 16.500h8M15 14.500L11 8M15 18.500l-4 7" strokeWidth="2.500" /></svg></Tile><div className="absolute -top-[5px] -right-[4px] h-[17px] w-[17px] rounded-full bg-[#ef3b31] text-center text-[11px] leading-[17px] text-white">1</div></div> },
  { icon: <div className="relative"><Tile className="border-2 border-white bg-[linear-gradient(#7da6e8_0%,#a9c4ef_50%,#2c4a7e_52%,#385a8c_68%,#cdbfae_75%)]" /><div className="absolute -right-px -bottom-[1px] h-[18px] w-[17px] rounded-[3px] bg-[linear-gradient(#15181c_45%,#cfd2d4_50%)]" /></div> },
];
const dockRight: DockItem[] = [
  { icon: <Docker /> }, { icon: <Docker /> },
  { dot: true, icon: <svg width="40" height="42" viewBox="0 0 40 42" fill="none" strokeLinejoin="round"><path d="M6 8l24 31M7 38L28 13" stroke="#fff" strokeWidth="11" /><circle cx="29" cy="11" r="10" fill="#fff" /><path d="M4 6l5-1 24 31-4 4h-5zM5 39v-6L24 14l5 5-17 17-3 3z" fill="#3b8a35" stroke="#1f4f1c" strokeWidth="1.200" /><circle cx="29" cy="11" r="6" stroke="#3b8a35" strokeWidth="5" /></svg> },
];

const DockSlot = ({ item }: { item: DockItem }) => (
  <div className="relative flex h-[54px] w-[47px] shrink-0 items-center justify-center pb-[4px]">
    {item.icon}
    {item.dot && <div className="absolute bottom-[2px] h-[4px] w-[4px] rounded-full bg-[#a9a6ad]" />}
  </div>
);

function Dock() {
  return (
    <div className="absolute top-[1019px] left-[254px] flex h-[57px] w-[1412px] items-center rounded-[16px] border border-[#4a4b4e] bg-[linear-gradient(90deg,#26292c_0%,#2b2330_10%,#3a1c42_20%,#3a1c42_28%,#2b2330_36%,#232729_44%,#24272a_100%)] pl-[2px]">
      {dock.map((d, i) => <DockSlot key={i} item={d} />)}
      <div className="mx-[10.500px] h-[42px] w-px bg-[#55585b]" />
      {dockRight.map((d, i) => <DockSlot key={i} item={d} />)}
      <div className="mx-[9.500px] h-[42px] w-px bg-[#55585b]" />
      <DockSlot item={{ icon: <svg width="35" height="42" viewBox="0 0 35 42"><path d="M1 8h33v26H1z" fill="#35a6ec" /><path d="M3 1h20l9 11v29H3z" fill="#f5f5f5" /><path d="M22 1l10 12H22z" fill="#cfd1d3" /><path d="M11 17h14l2 17H9z" fill="#8b8f92" /></svg> }} />
      <DockSlot item={{ icon: <svg width="42" height="34" viewBox="0 0 42 34"><rect y="2" width="42" height="26" fill="#050606" /><path d="M2 6h6v6H2zM11 6h6v6h-6zM20 6h6v6h-6zM2 18h6v6H2zM11 18h6v6h-6zM20 18h6v6h-6z" fill="#262829" /><rect x="29" y="20" width="12" height="13" rx="2" fill="#0f1c1b" stroke="#6d7a7a" /></svg> }} />
      <DockSlot item={{ icon: <svg width="34" height="42" viewBox="0 0 34 42"><path d="M2 4h30l-4 35q-11 4-22 0z" fill="#77797a" /><path d="M8 8l2 30M15 9v31" stroke="#989a9b" strokeWidth="2" /><ellipse cx="17" cy="5.500" rx="15.500" ry="4.500" fill="#b8b7b5" /><path d="M5 5l4-4 5 4 3-4 5 4 5-3 2 3-12 5z" fill="#eceae8" /><path d="M9 3l3 3M20 3l3 3" stroke="#c2593f" /></svg> }} />
    </div>
  );
}

function Desktop() {
  return (
    <div className="absolute inset-x-0 top-[1018px] h-[62px] overflow-hidden bg-[linear-gradient(90deg,#15161a_0%,#1b1a1d_8%,#0c0d10_16%,#17181a_18%,#1a1a1b_100%)] text-[12.500px] text-[#c9c9ca]">
      <div className="absolute top-[48px] left-[323px] h-[14px] w-[343px] bg-black pl-[4px] font-['Liberation_Mono',monospace] text-[12px] leading-[14px] whitespace-pre text-[#a9a9a9]"><span className="text-[#b5b52a]">prestashop_1 |</span> 172.30.0.1     [11/Apr/2021:16:2</div>
      <div className="absolute top-[48px] left-[684px] h-[13px] w-[13px] rounded-[3px] border border-[#555]" />
      <div className="absolute top-[47px] left-[705px] leading-[15px]">iceman</div>
      <div className="absolute top-[50px] left-[832px] h-[12px] w-px bg-black" />
      <div className="absolute top-[-7px] left-[1573px] w-[100px] text-right leading-[19px]">openguru</div>
      <div className="absolute top-[-7px] left-[1680px] w-[130px] text-center leading-[19px]">closure-library-<br />master<div className="-mt-[3px] text-[11px] text-[#4473c5]">16 Objekte</div></div>
      <div className="absolute top-[-7px] left-[1800px] w-[130px] text-center leading-[19px]">365layouts-<br />interface-master<div className="-mt-[3px] text-[11px] text-[#4473c5]">5 Objekte</div></div>
      <div className="absolute top-[57px] left-[1122px] h-[8px] w-[27px] bg-[#d5d5d5] [clip-path:polygon(0_0,75%_0,100%_100%,0_100%)]" />
      <div className="absolute top-[57px] left-[1363px] h-[8px] w-[30px] bg-[#d5d5d5] [clip-path:polygon(0_0,75%_0,100%_100%,0_100%)]" />
      <div className="absolute top-[57px] left-[1483px] h-[8px] w-[33px] bg-[#bdbdbd] [clip-path:polygon(0_0,75%_0,100%_100%,0_100%)]" />
      <div className="absolute top-[57px] left-[1724px] h-[8px] w-[32px] bg-[#d5d5d5] [clip-path:polygon(0_0,75%_0,100%_100%,0_100%)]" />
      <div className="absolute top-[57px] left-[1845px] h-[8px] w-[30px] bg-[#e4c6c6] text-center text-[7px] leading-[8px] font-bold text-[#c22]">RAI</div>
    </div>
  );
}

export default function App() {
  return (
    <div className="relative h-[1080px] w-[1920px] overflow-hidden bg-[#3d4863] font-['Inter',sans-serif]">
      <Desktop />
      <MenuBar />
      <div className="relative h-[994px] overflow-hidden rounded-[10px] border-t border-[#5b5b5d] bg-[#323234]">
        <TabBar />
        <Toolbar />
        <Bookmarks />
        <div className="relative h-[892px] overflow-hidden border-t border-black bg-[#eff1f2]">
          <ShopHeader />
          <div className="flex">
            <Sidebar />
            <div className="w-[1710px]">
              <PageHead />
              <FilterPanel />
              <div className="mt-[20px] ml-[15px] flex gap-[11px]">
                <LeftColumn />
                <MidColumn />
                <RightColumn />
              </div>
            </div>
          </div>
          <div className="absolute inset-0 bg-[#363a41]/50" />
          <div className="absolute top-[2px] right-[2px] h-[449px] w-[7px] rounded-full bg-[#46484c]" />
          <WelcomeModal />
          <div className="absolute bottom-0 left-0 flex h-[19px] w-[310px] items-center border-t border-r border-[#5a5a5c] bg-[#333335] pl-[4px] text-[11.500px] font-medium tracking-[-0.4px] whitespace-nowrap text-white">Übertragen der Daten von stats.g.doubleclick.net…</div>
        </div>
      </div>
      <Dock />
    </div>
  );
}
